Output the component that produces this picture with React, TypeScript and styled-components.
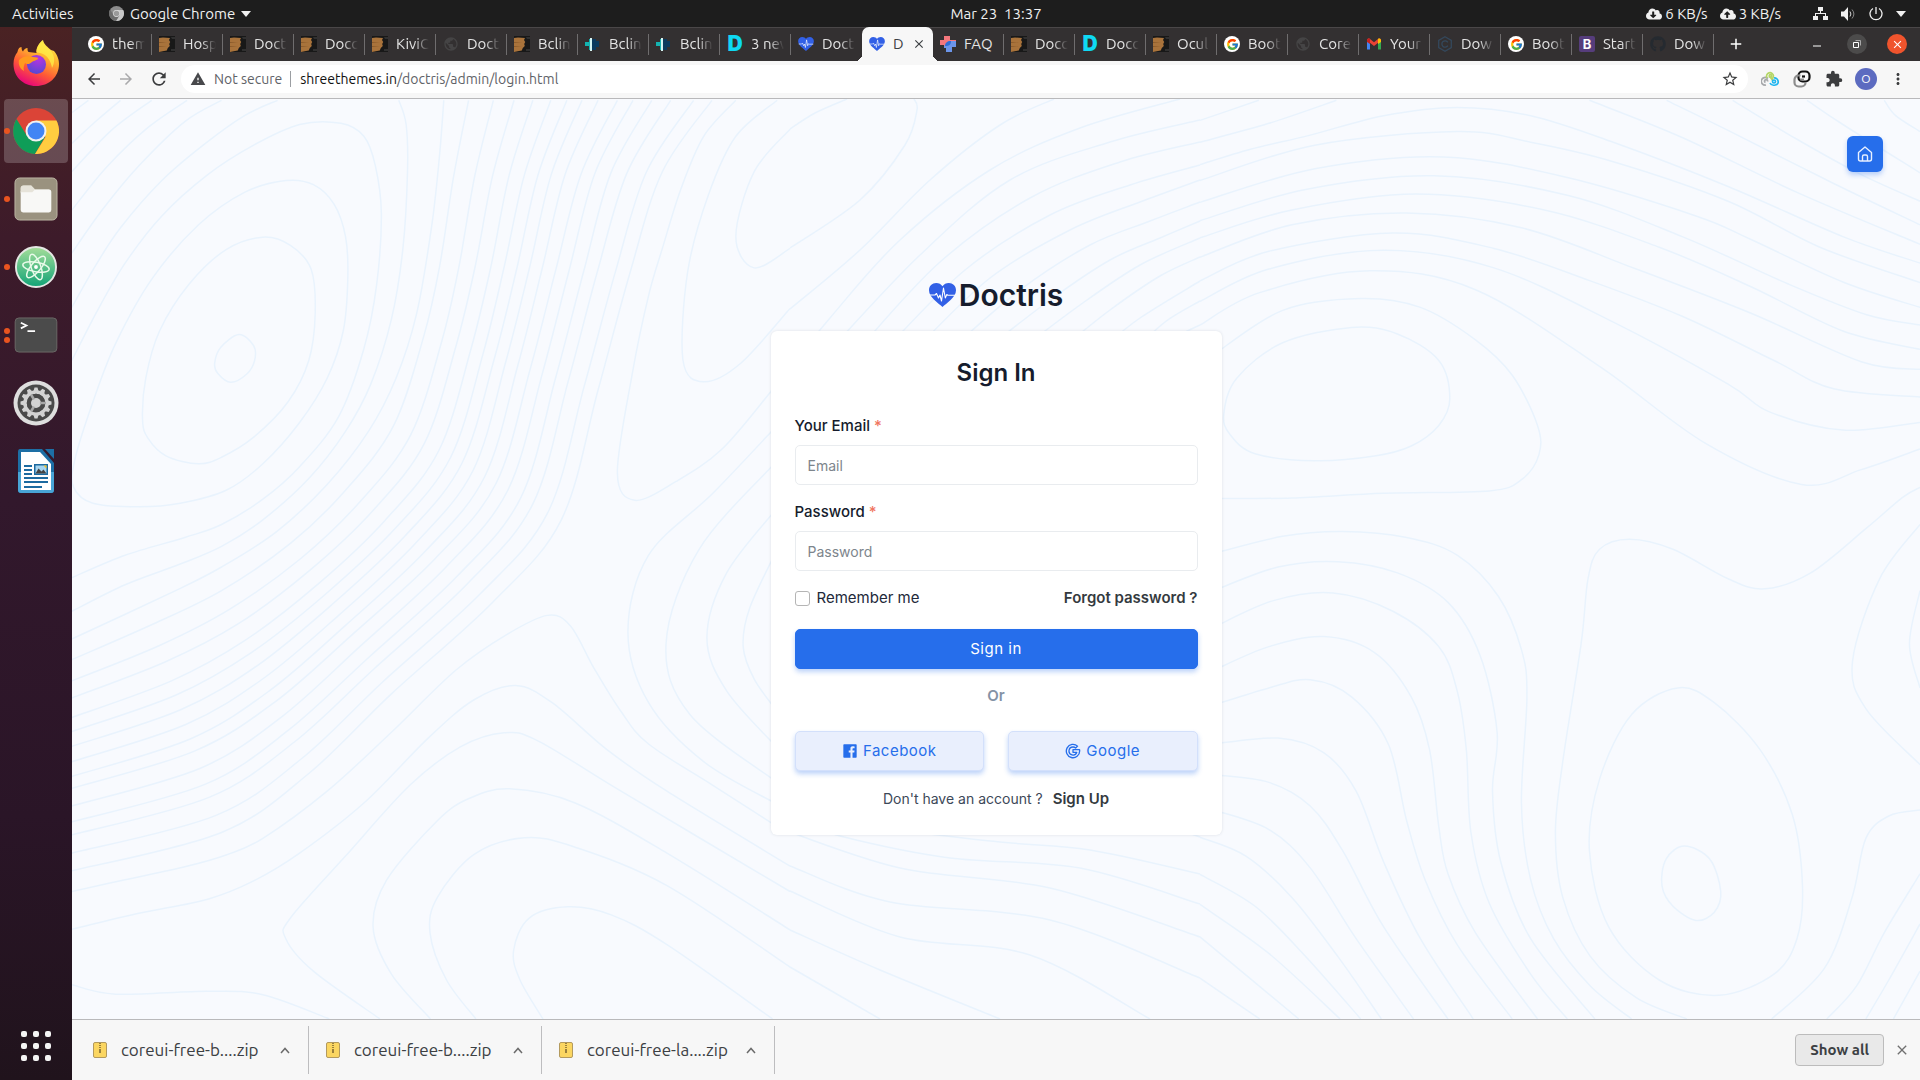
import React from 'react';
import styled, { createGlobalStyle, css } from 'styled-components';
import {
  MdArrowBack,
  MdArrowForward,
  MdRefresh,
  MdWarning,
  MdStarBorder,
  MdExtension,
  MdMoreVert,
  MdPublic,
  MdClose,
  MdAdd,
} from 'react-icons/md';
import { FaCloudDownloadAlt, FaCloudUploadAlt, FaGithub } from 'react-icons/fa';
import { FcGoogle } from 'react-icons/fc';

const uiFont = `Ubuntu, "Noto Sans", "Open Sans", sans-serif`;
const pageFont = `Inter, "Liberation Sans", sans-serif`;
const blue = '#266eeb';

const GlobalStyle = createGlobalStyle`
  *, *::before, *::after { box-sizing: border-box; }
  body { margin: 0; background: #f7f7f7; }
  button, input { font: inherit; margin: 0; }
  button { border: 0; padding: 0; background: none; color: inherit; }
  a { color: inherit; text-decoration: none; }
  svg { display: block; flex: none; }
`;

const Desktop = styled.div`
  height: 100vh;
  display: flex;
  flex-direction: column;
  font-family: ${uiFont};
  overflow: hidden;
`;

/* ---------- system bar ---------- */

const SystemBar = styled.header`
  display: grid;
  grid-template-columns: 72px 1fr auto 1fr;
  align-items: center;
  height: 27px;
  flex: none;
  background: #1d1d1d;
  color: #f0f0f0;
  font-size: 15px;
  line-height: 20px;
`;

const BarGroup = styled.div<{ $end?: boolean }>`
  display: flex;
  align-items: center;
  gap: 12px;
  padding: ${(p) => (p.$end ? '0 14px 0 0' : '0 0 0 37px')};
  justify-content: ${(p) => (p.$end ? 'flex-end' : 'flex-start')};
`;

const BarItem = styled.button`
  display: flex;
  align-items: center;
  gap: 6px;
`;

const ActivitiesItem = styled(BarItem)`
  padding-left: 12px;
`;

const NetSpeed = styled.span`
  display: flex;
  align-items: center;
  gap: 3px;
`;

const Tray = styled.div`
  display: flex;
  align-items: center;
  gap: 13px;
  margin-left: 20px;
`;

const Clock = styled.time`
  white-space: pre;
`;

/* ---------- dock ---------- */

const Body = styled.div`
  flex: 1;
  min-height: 0;
  display: flex;
`;

const Dock = styled.nav`
  width: 72px;
  flex: none;
  display: flex;
  flex-direction: column;
  justify-content: space-between;
  align-items: center;
  padding: 4px 4px 19px;
  background: linear-gradient(#4a2223 0%, #3d1b2a 20%, #32182c 45%, #2a1527 75%, #20131c 100%);
`;

const DockList = styled.div`
  display: flex;
  flex-direction: column;
  gap: 4px;
  width: 100%;
`;

const DockItem = styled.button<{ $active?: boolean }>`
  height: 64px;
  display: grid;
  grid-template-columns: 6px 1fr 6px;
  align-items: center;
  justify-items: center;
  border-radius: 4px;
  background: ${(p) => (p.$active ? 'rgba(255,255,255,.2)' : 'transparent')};
`;

const Dots = styled.span`
  display: flex;
  flex-direction: column;
  gap: 3px;
`;

const Dot = styled.i`
  width: 6px;
  height: 6px;
  border-radius: 50%;
  background: #e95420;
`;

const AppsGrid = styled.button`
  display: grid;
  grid-template-columns: repeat(3, 6px);
  gap: 6px;
`;

const AppsDot = styled.i`
  height: 6px;
  border-radius: 2px;
  background: #f4f4f4;
`;

/* ---------- browser ---------- */

const Browser = styled.div`
  flex: 1;
  min-width: 0;
  display: flex;
  flex-direction: column;
`;

const TabStrip = styled.div`
  height: 34px;
  flex: none;
  display: flex;
  align-items: stretch;
  padding: 0 13px 0 9px;
  box-shadow: inset 0 1px #4a4748;
  background: #333031;
  color: #e4e4e4;
`;

const Tabs = styled.div`
  display: flex;
  min-width: 0;
`;

const Tab = styled.div<{ $active?: boolean; $bare?: boolean }>`
  position: relative;
  flex: 0 1 71px;
  width: 71px;
  min-width: 0;
  display: flex;
  align-items: center;
  gap: 8px;
  padding: 0 7px;
  font-size: 15px;
  line-height: 20px;
  &::after {
    content: '';
    position: absolute;
    right: 0;
    top: 7px;
    width: 1px;
    height: 21px;
    background: ${(p) => (p.$bare ? 'transparent' : '#6f6d6e')};
  }
  ${(p) =>
    p.$active &&
    css`
      background: #f7f7f7;
      color: #3c4043;
      border-radius: 7px 7px 0 0;
      &::before,
      &::after {
        content: '';
        position: absolute;
        top: auto;
        bottom: 0;
        width: 7px;
        height: 7px;
      }
      &::before {
        left: -7px;
        background: radial-gradient(circle at 0 0, transparent 7px, #f7f7f7 7px);
      }
      &::after {
        right: -7px;
        background: radial-gradient(circle at 100% 0, transparent 7px, #f7f7f7 7px);
      }
    `}
`;

const TabTitle = styled.span<{ $solid?: boolean }>`
  flex: 1;
  min-width: 0;
  overflow: hidden;
  white-space: nowrap;
  ${(p) => !p.$solid && 'mask-image: linear-gradient(90deg, #000 55%, transparent 100%);'}
`;

const Favicon = styled.span<{ $bg?: string; $fg?: string; $round?: boolean }>`
  width: 16px;
  height: 16px;
  flex: none;
  display: flex;
  align-items: center;
  justify-content: center;
  border-radius: ${(p) => (p.$round ? 8 : 2)}px;
  background: ${(p) => p.$bg || 'transparent'};
  color: ${(p) => p.$fg || '#fff'};
  font: 700 13px/16px ${pageFont};
`;

const LetterMark = styled.span`
  font: 900 21px/16px ${pageFont};
`;

const NewTab = styled.button`
  margin-left: 13px;
`;

const WindowButtons = styled.div`
  margin-left: auto;
  display: flex;
  align-items: center;
  gap: 20px;
`;

const WindowButton = styled.button<{ $bg?: string }>`
  width: 20px;
  height: 20px;
  display: flex;
  align-items: center;
  justify-content: center;
  border-radius: 50%;
  background: ${(p) => p.$bg || 'transparent'};
  color: #fff;
`;

const Toolbar = styled.div`
  height: 38px;
  flex: none;
  display: flex;
  align-items: center;
  padding: 0 13px 1px;
  background: #f7f7f7;
  border-bottom: 1px solid #b9b9bb;
`;

const NavButtons = styled.div`
  display: flex;
  gap: 14px;
  margin-right: 12px;
`;

const NavButton = styled.button<{ $off?: boolean }>`
  color: ${(p) => (p.$off ? '#a9a9ab' : '#3b3c3e')};
`;

const Omnibox = styled.div`
  flex: 1;
  min-width: 0;
  height: 28px;
  display: flex;
  align-items: center;
  padding: 0 9px;
  border-radius: 14px;
  background: #fff;
  font-size: 14px;
  line-height: 20px;
  color: #5f6368;
`;

const Security = styled.button`
  display: flex;
  align-items: center;
  gap: 8px;
  padding-right: 8px;
  margin-right: 9px;
  border-right: 1px solid #9b9ea2;
  line-height: 16px;
`;

const Address = styled.span`
  flex: 1;
  b {
    font-weight: 400;
    color: #111;
  }
`;

const Extensions = styled.div`
  display: flex;
  align-items: center;
  gap: 14px;
  margin-left: 13px;
`;

const Avatar = styled.button`
  width: 22px;
  height: 22px;
  margin: 0 -2px;
  border-radius: 50%;
  background: #5c6bc0;
  color: #fff;
  font-size: 12px;
  line-height: 22px;
`;

/* ---------- page ---------- */

const Page = styled.main`
  position: relative;
  flex: 1;
  min-height: 0;
  display: flex;
  flex-direction: column;
  align-items: center;
  justify-content: center;
  overflow: hidden;
  background: #f8fafe;
  font-family: ${pageFont};
  font-size: 15px;
  line-height: 22px;
  color: #161c2d;
`;

const Backdrop = styled.svg`
  position: absolute;
  inset: 0;
  width: 100%;
  height: 100%;
`;

const HomeLink = styled.a`
  position: absolute;
  top: 37px;
  right: 37px;
  width: 36px;
  height: 36px;
  display: flex;
  align-items: center;
  justify-content: center;
  border-radius: 6px;
  background: ${blue};
  color: #fff;
  box-shadow: 0 3px 5px rgba(38, 110, 235, 0.3);
`;

const Logo = styled.a`
  position: relative;
  display: flex;
  align-items: center;
  gap: 3px;
  height: 24px;
  margin-bottom: 24px;
  font-size: 30px;
  font-weight: 600;
  line-height: 24px;
`;

const Card = styled.form`
  position: relative;
  width: 100%;
  max-width: 451px;
  padding: 24px;
  border-radius: 6px;
  background: #fff;
  box-shadow: 0 0 3px rgba(60, 72, 88, 0.15);
`;

const Title = styled.h1`
  margin: 0 0 24px;
  font-size: 24px;
  font-weight: 600;
  line-height: 36px;
  text-align: center;
`;

const Field = styled.div`
  margin-bottom: 16px;
`;

const Label = styled.label`
  display: block;
  margin-bottom: 8px;
  font-weight: 500;
  span {
    color: #f07560;
  }
`;

const TextInput = styled.input`
  display: block;
  width: 100%;
  height: 40px;
  padding: 0 12px;
  border: 1px solid #e9ecef;
  border-radius: 5px;
  background: #fff;
  font-size: 14px;
  line-height: 22px;
  color: #161c2d;
  outline: none;
  &::placeholder {
    color: #7d858c;
    opacity: 1;
  }
`;

const Row = styled.div`
  display: flex;
  justify-content: space-between;
  align-items: center;
  height: 22px;
  margin-bottom: 20px;
`;

const Check = styled.label`
  display: flex;
  align-items: center;
  gap: 7px;
  color: #22293a;
`;

const CheckInput = styled.input`
  appearance: none;
  width: 15px;
  height: 15px;
  border: 1px solid #b5b5b5;
  border-radius: 3px;
  background: #fff;
`;

const StrongLink = styled.a`
  font-weight: 600;
  color: #343a40;
`;

const Button = styled.button<{ $soft?: boolean }>`
  flex: 1;
  width: 100%;
  height: 40px;
  display: flex;
  align-items: center;
  justify-content: center;
  gap: 5px;
  border-radius: 5px;
  letter-spacing: 0.5px;
  color: ${(p) => (p.$soft ? blue : '#fff')};
  background: ${(p) => (p.$soft ? '#e9effd' : blue)};
  border: 1px solid ${(p) => (p.$soft ? '#d3e0fb' : blue)};
  box-shadow: 0 3px 5px rgba(38, 110, 235, 0.3);
`;

const Or = styled.p`
  margin: 16px 0 24px;
  text-align: center;
  font-weight: 600;
  color: #8492a6;
`;

const Social = styled.div`
  display: flex;
  gap: 24px;
`;

const SignUp = styled.p`
  display: flex;
  justify-content: center;
  gap: 10px;
  margin: 16px 0 0;
  line-height: 24px;
  small {
    font-size: 14px;
    color: #3c4858;
  }
`;

/* ---------- downloads ---------- */

const Downloads = styled.footer`
  height: 61px;
  flex: none;
  display: flex;
  align-items: center;
  padding: 0 10px 0 4px;
  border-top: 1px solid #b9b9bb;
  background: #f7f7f7;
  color: #3c4043;
  font-size: 17px;
  line-height: 20px;
`;

const Download = styled.div`
  flex: 0 1 233px;
  height: 48px;
  display: flex;
  align-items: center;
  gap: 14px;
  padding: 0 18px 0 17px;
  border-right: 1px solid #bdbdbf;
  white-space: nowrap;
  button {
    margin-left: auto;
  }
`;

const ShowAll = styled.button`
  margin-left: auto;
  height: 32px;
  padding: 0 14px;
  border: 1px solid #bcbcbc;
  border-radius: 4px;
  background: #e9e9e9;
  font-size: 15px;
  font-weight: 600;
`;

const CloseShelf = styled.button`
  margin-left: 10px;
  color: #707070;
`;

/* ---------- contour backdrop ---------- */

type Pt = [number, number];

const parse = (s: string): Pt[] => s.split('/').map((p) => p.split(',').map(Number) as Pt);

function smooth(pts: Pt[], closed = false) {
  const n = pts.length;
  const at = (i: number) => (closed ? pts[(i + n) % n] : pts[Math.max(0, Math.min(n - 1, i))]);
  let d = `M${pts[0][0]} ${pts[0][1]}`;
  for (let i = 0; i < (closed ? n : n - 1); i++) {
    const [a, b, c, e] = [at(i - 1), at(i), at(i + 1), at(i + 2)];
    d += `C${(b[0] + (c[0] - a[0]) / 6).toFixed(1)} ${(b[1] + (c[1] - a[1]) / 6).toFixed(1)} ${(
      c[0] -
      (e[0] - b[0]) / 6
    ).toFixed(1)} ${(c[1] - (e[1] - b[1]) / 6).toFixed(1)} ${c[0]} ${c[1]}`;
  }
  return closed ? d + 'Z' : d;
}

const westRings = [
  '368,406/400,425/402,450/385,473/350,487/322,472/315,455/328,428',
  '420,241/480,255/525,295/534,370/520,450/475,520/400,580/330,614/280,625/210,612/170,582/158,550/165,480/195,400/260,320/340,262',
  '470,145/530,152/575,185/600,240/605,310/595,400/560,480/500,555/420,625/340,670/240,692/150,698/50,692/8,665/10,620/50,520/100,420/180,310/280,220/380,165',
];

const westLines = [
  '40,9/4,30',
  '110,9/60,42/4,82',
  '178,9/90,60/4,130',
  '255,9/170,55/80,122/4,195',
  '330,9/250,45/150,120/70,195/4,268',
  '452,9/380,35/290,85/200,145/110,225/55,290/4,360',
  '4,450/60,365/120,285/200,205/300,135/400,85/500,50/590,48/640,70/665,120/678,200/668,320/640,430/585,545/500,630/420,685/330,728/250,750/120,780/4,818',
  '716,9/732,50/735,130/725,260/700,380/655,490/600,570/520,650/420,720/330,765/240,795/120,830/4,875',
  '814,9/805,100/788,220/755,370/710,480/650,570/560,660/450,740/330,800/230,840/4,922',
  '4,1350/120,1330/250,1308/340,1288/420,1260/560,1180/700,1080/840,975/950,915/1040,882/1090,900/1140,970/1200,1045/1260,1100/1400,1170/1540,1240',
  '4,1414/150,1387/300,1363/400,1332/500,1285/640,1200/780,1090/880,1025/970,1001/1050,1030/1170,1110/1300,1180/1568,1307',
  '675,1566/530,1485/470,1430/480,1395/600,1290/740,1170/850,1105/945,1081/1020,1095/1200,1180/1568,1350',
  '785,1566/700,1490/660,1410/690,1330/800,1230/870,1192/958,1176/1100,1200/1300,1285/1568,1415',
  '884,1566/820,1500/784,1420/800,1360/880,1287/990,1259/1100,1275/1300,1340/1568,1478',
  '1030,1566/980,1500/966,1450/1000,1395/1085,1376/1180,1390/1300,1440/1530,1566',
  '4,1508/100,1524/300,1519/420,1525/565,1566',
  '1450,9/1380,70/1330,160/1290,260/1260,340/1225,470/1192,640/1230,687/1320,655/1420,600/1527,502',
  '1540,9/1450,70/1390,170/1345,300/1335,450/1380,486/1460,455/1568,362',
  '1568,58/1490,130/1450,240/1490,293/1568,260',
  '1540,560/1400,675/1260,780/1215,910/1260,1030/1380,1130/1540,1202',
  '1540,620/1370,770/1298,930/1350,1050/1540,1165',
  '1540,700/1430,810/1387,920/1430,1010/1540,1106',
  '1540,770/1480,870/1466,935/1490,990/1540,1045',
];

const eastRings = [
  '330,394/430,405/520,450/544,515/520,560/460,595/380,612/250,620/120,608/65,575/52,540/80,480/180,420',
  '1040,1005/1120,1030/1220,1110/1290,1220/1312,1340/1300,1430/1250,1490/1130,1526/1000,1500/890,1410/848,1280/870,1160/940,1050',
  '1055,1273/1110,1295/1134,1350/1120,1385/1080,1399/1030,1375/1006,1340/1015,1295',
];

const eastLines = [
  '0,43/128,9',
  '0,80/150,48/297,9',
  '0,118/110,92/240,68/400,35/560,21/720,35/900,80/1150,155/1400,240/1568,285',
  '0,145/250,85/560,62/720,80/900,113/1150,180/1350,258/1568,318',
  '0,182/250,125/530,105/800,140/1080,205/1200,245/1400,317/1568,360',
  '0,213/230,160/510,137/800,170/1050,240/1280,320/1450,372/1568,390',
  '0,242/200,195/470,168/750,195/1000,258/1200,325/1400,400/1568,431',
  '0,275/200,220/450,200/700,225/950,295/1200,370/1440,452/1568,465',
  '0,315/150,265/420,234/640,260/850,315/1050,375/1250,450/1380,498/1568,512',
  '0,350/150,295/400,263/640,293/900,385/1150,490/1240,537/1400,568/1568,555',
  '0,390/130,335/370,298/600,330/870,460/1100,590/1310,660/1440,635/1568,600',
  '848,9/1050,72/1300,165/1568,253',
  '1016,9/1150,60/1380,150/1568,220',
  '1160,9/1300,75/1440,135/1568,180',
  '1322,9/1400,50/1568,132',
  '1490,9/1515,35/1568,62',
  '30,440/180,365/350,345/480,360/600,415/680,475/735,560/738,610/700,652/630,671/400,675/200,683/30,684',
  '30,777/180,748/310,740/450,750/560,780/650,850/700,940/712,1020/700,1200/720,1330/770,1430/850,1510/940,1566',
  '30,840/170,800/300,791/430,810/540,860/610,950/647,1080/637,1180/655,1300/720,1430/860,1566',
  '30,902/160,857/290,844/420,875/520,935/560,1010/580,1110/590,1250/630,1370/720,1490/800,1566',
  '30,975/150,935/270,918/380,945/460,1020/500,1110/520,1240/540,1320/600,1420/735,1566',
  '30,1034/150,1005/240,991/330,1020/410,1100/450,1230/490,1330/560,1440/680,1566',
  '30,1100/170,1090/270,1115/340,1180/400,1300/480,1430/595,1566',
  '30,1152/150,1165/240,1205/310,1280/400,1410/540,1566',
  '30,1212/150,1245/240,1310/340,1430/465,1566',
  '0,1258/100,1290/200,1360/300,1460/395,1566',
  '0,1321/120,1375/230,1460/350,1566',
  '0,1372/150,1455/305,1566',
  '0,1427/215,1566',
  '0,1497/130,1566',
  '1568,665/1530,682/1450,735/1330,810/1230,837/1150,820/1030,770/935,753/870,770/845,820/830,930/790,1130/774,1250/790,1360/850,1460/950,1530/1060,1566',
  '1568,728/1480,820/1421,960/1450,1040/1568,1135',
  '1568,840/1545,930/1568,1005',
  '1568,1212/1500,1222/1450,1260/1420,1360/1360,1480/1245,1566',
  '1568,1320/1490,1420/1430,1510/1365,1566',
  '1568,1405/1500,1500/1450,1566',
  '1568,1485/1510,1566',
];

const centreLines = [
  '790,129/815,113/847,99',
  '790,248/860,200/905,145/917,110/914,99',
  '790,309/860,250/930,180/1000,125/1054,99',
  '771,391/830,318/900,240/990,170/1080,128/1180,99',
  '830,350/920,255/1010,180/1110,142/1200,120',
  '858,350/940,262/1030,198/1120,162/1200,142',
  '885,350/965,270/1050,215/1130,185/1200,165',
  '915,350/990,278/1070,230/1140,202/1200,180',
  '950,350/1020,290/1090,245/1150,221/1200,202',
  '985,350/1050,300/1110,260/1160,238/1200,221',
  '1020,350/1080,305/1140,265/1200,238',
  '1060,350/1110,310/1160,276/1200,257',
  '1100,350/1140,318/1200,281',
  '1135,350/1165,322/1200,301',
  '1160,350/1180,335/1200,325',
  '771,825/900,868/1050,888/1200,937',
  '800,820/840,836/950,858/1080,868/1200,904',
  '880,828/1000,842/1090,850/1200,874',
  '1180,830/1200,837',
  '790,866/890,902/1050,920/1200,978',
  '790,891/900,937/1030,955/1150,1019',
  '790,930/880,970/1000,1019',
  '790,967/880,1019',
];

const slopeTops = [868, 922, 967, 1008, 1047, 1082, 1115, 1150, 1192, 1226, 1267, 1308, 1358, 1398];
const slopeEnds = [957, 993, 1022, 1055, 1079, 1104, 1130, 1155, 1175, 1205, 1232, 1254, 1285, 1315];
const slopeFirst = parse('868,9/835,140/805,290/770,410/705,560/600,670/480,760/330,840/180,897/4,957');
const slopeLast = parse('1398,9/1290,130/1220,300/1150,500/1070,720/920,860/700,1015/520,1150/330,1250/4,1315');
const slopes = slopeTops.map((top, i) => {
  const t0 = (top - 868) / 530;
  const t1 = (slopeEnds[i] - 957) / 358;
  return slopeFirst.map((p, k): Pt => {
    const t = t0 + ((t1 - t0) * k) / 9;
    const q = slopeLast[k];
    return [Math.round(p[0] + (q[0] - p[0]) * t), Math.round(p[1] + (q[1] - p[1]) * t)];
  });
});

const line = { vectorEffect: 'non-scaling-stroke' as const };

const Contours = () => (
  <Backdrop viewBox="0 0 1848 920" preserveAspectRatio="xMidYMid slice" fill="none" stroke="#e9f3fd" strokeWidth="1.5" aria-hidden="true">
    <g transform="translate(-2 -4) scale(.4592 .59)">
      {westRings.map((s) => <path key={s} {...line} d={smooth(parse(s), true)} />)}
      {westLines.map((s) => <path key={s} {...line} d={smooth(parse(s))} />)}
      {slopes.map((p, i) => <path key={i} {...line} d={smooth(p)} />)}
    </g>
    <g transform="translate(1128 -4) scale(.4592 .59)">
      {eastRings.map((s) => <path key={s} {...line} d={smooth(parse(s), true)} />)}
      {eastLines.map((s) => <path key={s} {...line} d={smooth(parse(s))} />)}
    </g>
    <g transform="translate(-72 -99)">
      {centreLines.map((s) => <path key={s} d={smooth(parse(s))} />)}
    </g>
  </Backdrop>
);

/* ---------- drawings ---------- */

const Heart = ({ w, h }: { w: number; h: number }) => (
  <svg width={w} height={h} viewBox="0 0 27 24">
    <path fill="#3260e6" d="M13.5 24C10 20.5 0 14.500 0 7.300 0 3 3.200 0 7.200 0c2.600 0 5 1.200 6.300 3.300C14.800 1.200 17.200 0 19.800 0 23.800 0 27 3 27 7.300 27 14.500 17 20.500 13.500 24Z" />
    <path fill="none" stroke="#fff" strokeWidth="1.100" strokeLinejoin="round" d="M1 12h5l1.500-1.500L9.500 15l1.500-3 1.500 6 2-13 1.800 10 1.500-3.500 1 .8H26" />
  </svg>
);

const Leather = () => (
  <svg width="16" height="16" viewBox="0 0 16 16">
    <path fill="#181818" d="M0 0h16v16H0z" />
    <path fill="#a9733b" d="M0 2l4-.5 7 .5-1 2 1.200 2-1 2 .6 2-2 2-1 2.500L5 15l-5 1z" />
    <path fill="#8a5a2a" d="M0 6l8 .5-8 .5zM0 10l8 .5-8 .5z" />
    <path fill="#303030" d="M12 1h4v2h-3zM12 13h4v2h-4z" />
  </svg>
);

const TealCross = () => (
  <svg width="16" height="16" viewBox="0 0 16 16">
    <path fill="#0b3a5e" d="M7 3h4v2h3v6h-3v3H7z" />
    <path fill="#14b3b0" d="M0 6h4V3h1v11H4v-4H0z" />
    <path fill="#d6f4f2" d="M5 2h2v13H5z" />
  </svg>
);

const PlusPair = () => (
  <svg width="16" height="16" viewBox="0 0 16 16">
    <path fill="#f4777c" d="M4 0h6v4h6v4l-6 3H4V9H0V4h4z" />
    <path fill="#6c95ea" d="M4 10l5-5h7v6h-4v5H6v-4H4z" />
    <path fill="#2f6fd6" d="M5 10c0-3 2-5 6-5 0 4-2 5-6 5Z" />
  </svg>
);

const Gmail = () => (
  <svg width="16" height="16" viewBox="0 0 16 16">
    <path fill="#4285f4" d="M1 4v9.500h3V7z" />
    <path fill="#34a853" d="M15 4v9.500h-3V7z" />
    <path fill="#ea4335" d="M1 4.500C1 2.500 3 2 4 3l4 3.200L12 3c1-1 3-.5 3 1.500L8 10z" />
    <path fill="#fbbc04" d="M12 3c1-1 3-.5 3 1.500V6l-3 2z" />
    <path fill="#c5221f" d="M4 3C3 2 1 2.500 1 4.500V6l3 2z" />
  </svg>
);

const CoreMark = () => (
  <svg width="16" height="16" viewBox="0 0 16 16" fill="none" stroke="#34485c" strokeWidth="1.300">
    <path d="M8 .8l6.300 3.600v7.200L8 15.200l-6.300-3.600V4.400z" />
    <path d="M10.800 6.300A3.200 3.200 0 1 0 10.800 9.700" />
  </svg>
);

const GMark = () => (
  <Favicon $bg="#fff" $round>
    <FcGoogle size={13} />
  </Favicon>
);

const DMark = () => (
  <Favicon $fg="#0fd9f3">
    <LetterMark>D</LetterMark>
  </Favicon>
);

const Globe = () => <MdPublic size={16} color="#454445" />;

const Firefox = () => (
  <svg width="46" height="46" viewBox="0 0 46 46">
    <defs>
      <linearGradient id="fx" x1=".8" y1="0" x2=".3" y2="1">
        <stop offset="0" stopColor="#fff44f" />
        <stop offset=".35" stopColor="#ffb02e" />
        <stop offset=".65" stopColor="#ff5a36" />
        <stop offset="1" stopColor="#e6007e" />
      </linearGradient>
      <radialGradient id="fxc" cx=".6" cy=".2" r=".9">
        <stop offset="0" stopColor="#b833e1" />
        <stop offset="1" stopColor="#4a4bd0" />
      </radialGradient>
    </defs>
    <path fill="url(#fx)" d="M23 46C10 46 .5 36.500.5 24c0-5 1.500-9 4-12 .3-2 1.500-5 4-5 0 2 .5 4 1.500 4.500C11 9.500 12.500 8 14.500 8c0 2 0 3 1 4l8 1c-1-5 3-10 6.500-13 1 5 5 7 8 10l3 1c4 5 5 9 5 13 0 13-10 22-23 22Z" />
    <path fill="#fff04a" opacity=".75" d="M29.500 0c1 6 6 8 8.500 11 4 5 4 12 1 17-1-6-4-12-9-14-3-1.500-6-1-6.500-2 0-5 3-9 6-12Z" />
    <circle cx="23.500" cy="24.500" r="9.500" fill="url(#fxc)" />
    <path fill="#ff9a1f" d="M6 20c3-3 8-5 14-3 3 .5 5 0 5 1.500s-4 2-6 3.500c-2 2-5 3-7 1-1 3-2 5-1 8-4-2-6-7-5-11Z" />
  </svg>
);

const Chrome = ({ size, grey }: { size: number; grey?: boolean }) => {
  const c = grey ? ['#8c8c8c', '#6d6d6d', '#c9c9c9', '#9a9a9a'] : ['#db4437', '#0f9d58', '#ffcd40', '#4285f4'];
  return (
    <svg width={size} height={size} viewBox="0 0 46 46">
      <circle cx="23" cy="23" r="23" fill={c[0]} />
      <path fill={c[1]} d="M3.500 11A23 23 0 0 0 22 46l10-17-9-6-9 5z" />
      <path fill={c[2]} d="M23 12.500h20.500A23 23 0 0 1 22 46l10.500-17z" />
      <circle cx="23" cy="23" r="10.500" fill={grey ? '#ddd' : '#f1f1f1'} />
      <circle cx="23" cy="23" r="8.500" fill={c[3]} />
    </svg>
  );
};

const Files = () => (
  <svg width="44" height="44" viewBox="0 0 46 46">
    <rect x="1" y="1" width="44" height="44" rx="5" fill="#9a927f" stroke="#bdb8a6" />
    <path fill="#d9d5c7" d="M7 12q0-3 3-3h8l4 4h15v4H7z" />
    <rect x="7" y="13" width="32" height="24" rx="2.500" fill="#f8f8f6" />
    <path fill="#e6e3d9" d="M7 12q0-3 3-3h8l4 4-3 3H7z" />
  </svg>
);

const Atom = () => (
  <svg width="42" height="42" viewBox="0 0 44 44">
    <defs>
      <linearGradient id="atom" x1="0" y1="0" x2="0" y2="1">
        <stop offset="0" stopColor="#a5de9a" />
        <stop offset="1" stopColor="#11a376" />
      </linearGradient>
    </defs>
    <circle cx="22" cy="22" r="21" fill="url(#atom)" stroke="#e5e7e4" strokeWidth="2" />
    <g fill="none" stroke="#eafbea" strokeWidth="1.500">
      <ellipse cx="22" cy="22" rx="14" ry="5" transform="rotate(10 22 22)" />
      <ellipse cx="22" cy="22" rx="14" ry="5" transform="rotate(70 22 22)" />
      <ellipse cx="22" cy="22" rx="14" ry="5" transform="rotate(130 22 22)" />
    </g>
    <circle cx="22" cy="22" r="2" fill="#fff" />
  </svg>
);

const Terminal = () => (
  <svg width="44" height="36" viewBox="0 0 46 38">
    <rect x="1" y="1" width="44" height="36" rx="4" fill="#4b4b4b" stroke="#6c6a68" />
    <path d="M7 6l6 3-6 3M14 15h8" fill="none" stroke="#fff" strokeWidth="1.800" />
  </svg>
);

const cogTeeth = Array.from({ length: 12 }, (_, i) => i * 30);

const Settings = () => (
  <svg width="46" height="46" viewBox="0 0 46 46" fill="none">
    <circle cx="23" cy="23" r="22.500" fill="#dedede" />
    <circle cx="23" cy="23" r="18.500" fill="#4a4a4a" />
    {cogTeeth.map((a) => (
      <path key={a} d="M20.500 11l1-3.500h3l1 3.500z" fill="#d2d2d2" transform={`rotate(${a} 23 23)`} />
    ))}
    <circle cx="23" cy="23" r="11" stroke="#d2d2d2" strokeWidth="3.500" />
    <circle cx="23" cy="23" r="8" stroke="#4a4a4a" strokeWidth="2.500" />
    <circle cx="23" cy="23" r="5" fill="#d2d2d2" />
    <path d="M23 23h10M23 23l-5-8.500M23 23l-5 8.500" stroke="#a8a8a8" strokeWidth="2.500" />
    <circle cx="23" cy="23" r="4" fill="#d2d2d2" />
  </svg>
);

const Writer = () => (
  <svg width="38" height="46" viewBox="0 0 38 46">
    <path fill="#1d6fa5" d="M3 1h22l12 14v27q0 3-3 3H4q-3 0-3-3V4q0-3 2-3Z" />
    <path fill="#48a5d6" d="M1 24h36v18q0 3-3 3H4q-3 0-3-3z" />
    <path fill="#1d6fa5" d="M28 1h9v10z" />
    <path fill="#fff" d="M4 4h19l11 12v26H4z" />
    <path stroke="#1c6aa0" strokeWidth="2" d="M7 18h8M7 22h8M7 26h8M7 30h24M7 34h24M7 39h18" />
    <path fill="#1c6aa0" d="M17 16h14v11H17z" />
    <path fill="#a7d5ef" d="M18.500 17.500h11v8h-11z" />
    <path fill="#444" d="M18.500 25.500l3-5 3 3 2-2 3 4z" />
    <path fill="#f5c21d" d="M26.500 17.500h3v3z" />
  </svg>
);

const Network = () => (
  <svg width="15" height="13" viewBox="0 0 15 13" fill="#f0f0f0">
    <path d="M5 0h5v4H5zM0 9h5v4H0zM10 9h5v4h-5zM7 4h1v2H7zM2 6h11v3h-1V7H3v2H2z" />
  </svg>
);

const Sound = () => (
  <svg width="15" height="14" viewBox="0 0 15 14" fill="none" stroke="#8a8a8a">
    <path fill="#f0f0f0" stroke="none" d="M0 4.500h3L7 0v14L3 9.500H0z" />
    <path stroke="#d8d8d8" d="M9 4.500q1.800 2.500 0 5" />
    <path d="M11 2.500q3.800 4.500 0 9" />
  </svg>
);

const Power = () => (
  <svg width="14" height="15" viewBox="0 0 14 15" fill="none" stroke="#f0f0f0" strokeWidth="1.300">
    <path d="M7 1v7M4 2.500a6 6 0 1 0 6 0" />
  </svg>
);

const Caret = () => (
  <svg width="10" height="6" viewBox="0 0 10 6" fill="#f0f0f0">
    <path d="M0 0h10L5 6z" />
  </svg>
);

const Loops = () => (
  <svg width="18" height="18" viewBox="0 0 18 18" fill="none" strokeWidth="1.700">
    <path stroke="#a6a8ab" d="M7 8.500A4 3.800 0 1 0 5 15M6.500 11.500a1.500 1.500 0 1 0-2 1" />
    <path stroke="#b4d665" d="M6 8a3.500 3.500 0 1 1 6.500-2l-1 3M9 6.500l3 4.500" />
    <circle cx="9.500" cy="6" r="1.300" stroke="#b4d665" />
    <path stroke="#1fb6f0" d="M9 13a4 3 0 0 0 8-2 3.500 3.500 0 0 0-4-3" />
    <circle cx="13" cy="11.500" r="1.500" stroke="#1fb6f0" />
  </svg>
);

const Links = () => (
  <svg width="18" height="18" viewBox="0 0 18 18" fill="none" strokeWidth="2.200">
    <rect x="5.500" y="1.500" width="11" height="10" rx="4" stroke="#111" />
    <path stroke="#8d8d8d" d="M11 9.500H7M7.500 5.500H5.500a4 4 0 0 0-4 4v3a4 4 0 0 0 4 4h3a4 4 0 0 0 4-4" />
    <path stroke="#111" d="M9 6.500h3" />
  </svg>
);

const HomeIcon = () => (
  <svg width="18" height="18" viewBox="0 0 18 18" fill="none" stroke="#e8f0ff" strokeWidth="1.400" strokeLinejoin="round">
    <path d="M2.500 7.500L9 2l6.500 5.500v6.500a2 2 0 0 1-2 2h-9a2 2 0 0 1-2-2z" />
    <path d="M6.500 16v-4.500a1.500 1.500 0 0 1 1.500-1.500h2a1.500 1.500 0 0 1 1.500 1.500V16" />
  </svg>
);

const FacebookIcon = () => (
  <svg width="16" height="16" viewBox="0 0 24 24" fill="currentColor">
    <path d="M20.900 2H3.100A1.100 1.100 0 0 0 2 3.100v17.800A1.100 1.100 0 0 0 3.100 22h9.580v-7.750h-2.600v-3h2.600V9a3.640 3.640 0 0 1 3.880-4 20.260 20.260 0 0 1 2.330.12v2.700H17.300c-1.260 0-1.500.6-1.500 1.470v1.930h3l-.39 3H15.800V22h5.100a1.100 1.100 0 0 0 1.100-1.100V3.100A1.100 1.100 0 0 0 20.900 2Z" />
  </svg>
);

const GoogleIcon = () => (
  <svg width="16" height="16" viewBox="0 0 24 24" fill="none" stroke="currentColor" strokeWidth="2" strokeLinejoin="round">
    <path d="M21.800 10H12v4h5.650A6 6 0 1 1 12 6a6 6 0 0 1 3.980 1.520L18.800 4.700A10 10 0 1 0 22 12a10 10 0 0 0-.2-2Z" />
  </svg>
);

const Zip = () => (
  <svg width="14" height="16" viewBox="0 0 14 16">
    <rect x=".5" y=".5" width="13" height="15" rx="1.500" fill="#fbd661" stroke="#b39a5e" />
    <path stroke="#7a6330" strokeWidth="1.500" strokeDasharray="1 1" d="M7 1v7" />
    <path stroke="#7a6330" strokeWidth="1.500" d="M7 8v3" />
  </svg>
);

const Chevron = () => (
  <svg width="10" height="7" viewBox="0 0 10 7" fill="none" stroke="#6b6b6b" strokeWidth="1.500">
    <path d="M1 6l4-4.500L9 6" />
  </svg>
);

/* ---------- data ---------- */

const tabs: { icon: React.ReactNode; title: string; active?: boolean }[] = [
  { icon: <GMark />, title: 'them' },
  { icon: <Leather />, title: 'Hosp' },
  { icon: <Leather />, title: 'Doct' },
  { icon: <Leather />, title: 'Docc' },
  { icon: <Leather />, title: 'KiviC' },
  { icon: <Globe />, title: 'Doct' },
  { icon: <Leather />, title: 'Bclin' },
  { icon: <TealCross />, title: 'Bclin' },
  { icon: <TealCross />, title: 'Bclin' },
  { icon: <DMark />, title: '3 new' },
  { icon: <Heart w={16} h={14} />, title: 'Doct' },
  { icon: <Heart w={16} h={14} />, title: 'D', active: true },
  { icon: <PlusPair />, title: 'FAQ' },
  { icon: <Leather />, title: 'Docc' },
  { icon: <DMark />, title: 'Docc' },
  { icon: <Leather />, title: 'Ocul' },
  { icon: <GMark />, title: 'Boot' },
  { icon: <Globe />, title: 'Core' },
  { icon: <Gmail />, title: 'Your' },
  { icon: <CoreMark />, title: 'Dow' },
  { icon: <GMark />, title: 'Boot' },
  { icon: <Favicon $bg="#563d7c">B</Favicon>, title: 'Start' },
  { icon: <FaGithub size={16} color="#252a30" />, title: 'Dow' },
];

const dock: { name: string; icon: React.ReactNode; dots: number; active?: boolean }[] = [
  { name: 'Firefox', icon: <Firefox />, dots: 0 },
  { name: 'Google Chrome', icon: <Chrome size={46} />, dots: 1, active: true },
  { name: 'Files', icon: <Files />, dots: 1 },
  { name: 'Atom', icon: <Atom />, dots: 1 },
  { name: 'Terminal', icon: <Terminal />, dots: 2 },
  { name: 'Settings', icon: <Settings />, dots: 0 },
  { name: 'Writer', icon: <Writer />, dots: 0 },
];

const files = ['coreui-free-b....zip', 'coreui-free-b....zip', 'coreui-free-la....zip'];

export default function App() {
  return (
    <Desktop>
      <GlobalStyle />
      <SystemBar>
        <ActivitiesItem>Activities</ActivitiesItem>
        <BarGroup>
          <BarItem>
            <Chrome size={15} grey />
            Google Chrome
            <Caret />
          </BarItem>
        </BarGroup>
        <Clock>Mar 23  13:37</Clock>
        <BarGroup $end>
          <NetSpeed>
            <FaCloudDownloadAlt size={16} />6 KB/s
          </NetSpeed>
          <NetSpeed>
            <FaCloudUploadAlt size={16} />3 KB/s
          </NetSpeed>
          <Tray>
            <Network />
            <Sound />
            <Power />
            <Caret />
          </Tray>
        </BarGroup>
      </SystemBar>

      <Body>
        <Dock>
          <DockList>
            {dock.map((d) => (
              <DockItem key={d.name} $active={d.active} aria-label={d.name}>
                <Dots>
                  {Array.from({ length: d.dots }, (_, i) => (
                    <Dot key={i} />
                  ))}
                </Dots>
                {d.icon}
              </DockItem>
            ))}
          </DockList>
          <AppsGrid aria-label="Show applications">
            {Array.from({ length: 9 }, (_, i) => (
              <AppsDot key={i} />
            ))}
          </AppsGrid>
        </Dock>

        <Browser>
          <TabStrip>
            <Tabs>
              {tabs.map((t, i) => (
                <Tab key={i} $active={t.active} $bare={tabs[i + 1]?.active}>
                  {t.icon}
                  <TabTitle $solid={t.active || t.title === 'FAQ'}>{t.title}</TabTitle>
                  {t.active && (
                    <button aria-label="Close tab">
                      <MdClose size={14} />
                    </button>
                  )}
                </Tab>
              ))}
            </Tabs>
            <NewTab aria-label="New tab">
              <MdAdd size={18} color="#fff" />
            </NewTab>
            <WindowButtons>
              <WindowButton aria-label="Minimize">
                <svg width="8" height="6" viewBox="0 0 8 6">
                  <path d="M0 5h8" stroke="#fff" />
                </svg>
              </WindowButton>
              <WindowButton $bg="#4c4b4b" aria-label="Restore">
                <svg width="8" height="8" viewBox="0 0 8 8" fill="none" stroke="#fff">
                  <path d="M.5 2.500h5v5h-5z" />
                  <path d="M2.500.5h5v5" stroke="#aaa" />
                </svg>
              </WindowButton>
              <WindowButton $bg="#f0542d" aria-label="Close window">
                <MdClose size={13} />
              </WindowButton>
            </WindowButtons>
          </TabStrip>

          <Toolbar>
            <NavButtons>
              <NavButton aria-label="Back">
                <MdArrowBack size={18} />
              </NavButton>
              <NavButton $off aria-label="Forward">
                <MdArrowForward size={18} />
              </NavButton>
              <NavButton aria-label="Reload">
                <MdRefresh size={20} />
              </NavButton>
            </NavButtons>
            <Omnibox>
              <Security>
                <MdWarning size={16} color="#48494c" />
                Not secure
              </Security>
              <Address>
                <b>shreethemes.in</b>/doctris/admin/login.html
              </Address>
              <MdStarBorder size={18} color="#3b3c3e" />
            </Omnibox>
            <Extensions>
              <Loops />
              <Links />
              <MdExtension size={18} color="#3b3c3e" />
              <Avatar>O</Avatar>
              <MdMoreVert size={18} color="#3b3c3e" />
            </Extensions>
          </Toolbar>

          <Page>
            <Contours />
            <HomeLink href="#" aria-label="Home">
              <HomeIcon />
            </HomeLink>
            <Logo href="#">
              <Heart w={27} h={24} />
              Doctris
            </Logo>
            <Card onSubmit={(e) => e.preventDefault()}>
              <Title>Sign In</Title>
              <Field>
                <Label htmlFor="email">
                  Your Email <span>*</span>
                </Label>
                <TextInput id="email" type="email" placeholder="Email" />
              </Field>
              <Field>
                <Label htmlFor="password">
                  Password <span>*</span>
                </Label>
                <TextInput id="password" type="password" placeholder="Password" />
              </Field>
              <Row>
                <Check>
                  <CheckInput type="checkbox" />
                  Remember me
                </Check>
                <StrongLink href="#">Forgot password ?</StrongLink>
              </Row>
              <Button type="submit">Sign in</Button>
              <Or>Or</Or>
              <Social>
                <Button type="button" $soft>
                  <FacebookIcon />
                  Facebook
                </Button>
                <Button type="button" $soft>
                  <GoogleIcon />
                  Google
                </Button>
              </Social>
              <SignUp>
                <small>Don't have an account ?</small>
                <StrongLink href="#">Sign Up</StrongLink>
              </SignUp>
            </Card>
          </Page>

          <Downloads>
            {files.map((f, i) => (
              <Download key={i}>
                <Zip />
                {f}
                <button aria-label="Download options">
                  <Chevron />
                </button>
              </Download>
            ))}
            <ShowAll>Show all</ShowAll>
            <CloseShelf aria-label="Close downloads">
              <MdClose size={16} />
            </CloseShelf>
          </Downloads>
        </Browser>
      </Body>
    </Desktop>
  );
}
